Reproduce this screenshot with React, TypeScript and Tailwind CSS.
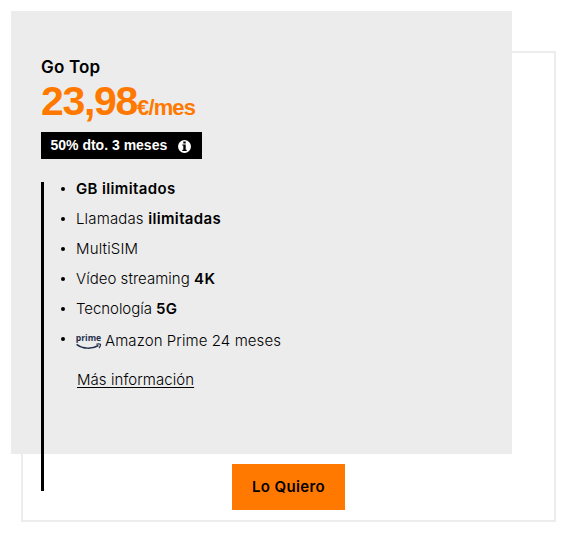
import type { ReactNode } from "react";

const features: { id: string; label: ReactNode; className: string }[] = [
  { id: "gb", label: <Strong>GB ilimitados</Strong>, className: "" },
  {
    id: "calls",
    label: (
      <>
        Llamadas <Strong>ilimitadas</Strong>
      </>
    ),
    className: "tracking-[0.15px]",
  },
  { id: "sim", label: "MultiSIM", className: "tracking-[0.15px]" },
  {
    id: "video",
    label: (
      <>
        Vídeo streaming <Strong>4K</Strong>
      </>
    ),
    className: "tracking-[0.03px]",
  },
  {
    id: "tech",
    label: (
      <>
        Tecnología <Strong>5G</Strong>
      </>
    ),
    className: "tracking-[-0.05px]",
  },
];

function Strong({ children }: { children: ReactNode }) {
  return <strong className="font-semibold tracking-[0.36px]">{children}</strong>;
}

function Bullet() {
  return <span className="mt-[12.5px] mr-[11px] ml-[17px] size-[4px] shrink-0 rounded-full bg-black" />;
}

function InfoIcon() {
  return (
    <svg viewBox="0 0 13 13" className="size-[13px]" aria-hidden="true">
      <circle cx="6.5" cy="6.5" r="6.5" fill="#fff" />
      <path d="M5.3 1.5h2.4v2.100H5.300zM4.300 4.400h3.400v5.400h1v1.200H4.300V9.800h1V5.600h-1z" fill="#000" />
    </svg>
  );
}

function PrimeLogo() {
  return (
    <svg viewBox="0 0 26 20" className="h-5 w-[26px] overflow-visible" role="img" aria-label="prime">
      <text
        x="-0.3"
        y="9.2"
        textLength="25.500"
        lengthAdjust="spacingAndGlyphs"
        fill="#232f4b"
        fontFamily="'Open Sans', sans-serif"
        fontWeight="700"
        fontSize="9.4"
      >
        prime
      </text>
      <path d="M.6 12.300c6.500 4.900 15.500 4.900 21.800 1.200" fill="none" stroke="#232f4b" strokeWidth="1.500" />
      <path d="M20.300 12.300c1.500-.5 3-.5 4.200 0 .2 1.200-.4 2.500-1.400 3.700" fill="none" stroke="#232f4b" strokeWidth="1.200" />
    </svg>
  );
}

export default function App() {
  return (
    <main className="flex h-[547px] w-[566px] bg-white pt-[51px] pl-[21px] font-['Liberation_Sans',Arial,sans-serif] text-black">
      <article className="h-[471px] w-[535px] border-2 border-[#ececec]">
        <div className="-mt-[42px] -ml-3 h-[443px] w-[501px] bg-[#ececec] pt-[46px] pl-[30px]">
          <h2 className="font-[Inter,sans-serif] text-[17px] leading-5 font-semibold tracking-[0.2px]">Go Top</h2>
          <p className="flex h-11 items-baseline font-bold text-[#ff7900]">
            <span className="text-[41px] leading-[48px] tracking-[-1.3px]">23,98</span>
            <span className="text-[22px] tracking-[-0.9px]">€/mes</span>
          </p>
          <div className="mt-[11px] flex h-[27px] w-[161px] items-center bg-black pl-[9.5px] text-white">
            <span className="text-[14px] font-bold">50% dto. 3 meses</span>
            <span className="mt-[2px] ml-auto pr-[11px]">
              <InfoIcon />
            </span>
          </div>

          {/* the rule runs past the bottom of the grey panel */}
          <div className="mt-[23px] flex h-[309px] flex-col items-start border-l-[3px] border-black font-[Inter,sans-serif] text-[15px] font-light">
            <ul className="-mt-2">
              {features.map((feature) => (
                <li key={feature.id} className="flex h-[30px]">
                  <Bullet />
                  <span className={`leading-[30px] ${feature.className}`}>{feature.label}</span>
                </li>
              ))}
              <li className="flex h-[34px]">
                <Bullet />
                <span className="mt-[8px] mr-[3px]">
                  <PrimeLogo />
                </span>
                <span className="leading-[34px] tracking-[0.08px]">Amazon Prime 24 meses</span>
              </li>
            </ul>
            <a href="#" className="mt-2.5 ml-[33px] leading-6 tracking-[0.06px] underline underline-offset-2">
              Más información
            </a>
          </div>
        </div>
        <button
          type="button"
          className="mt-2.5 ml-[209px] flex h-[46px] w-[113px] items-center justify-center bg-[#ff7900] pt-px font-[Inter,sans-serif] text-[15px] font-semibold tracking-[0.36px]"
        >
          Lo Quiero
        </button>
      </article>
    </main>
  );
}
